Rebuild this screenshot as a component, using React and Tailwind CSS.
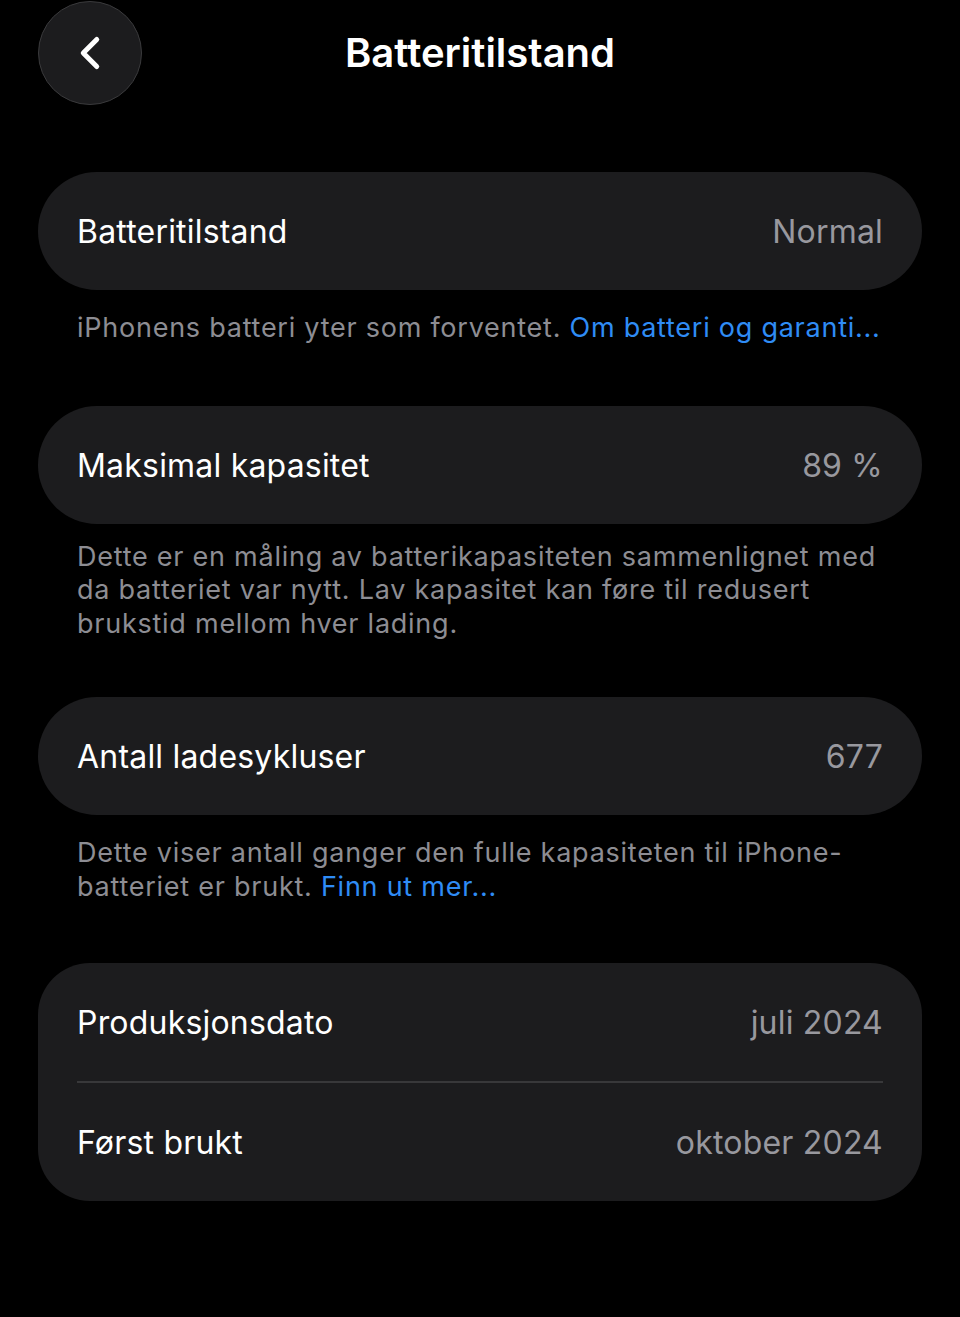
import { ChevronLeft } from "lucide-react";

const font = { fontFamily: "Inter, 'Noto Sans', sans-serif" };

const Row = ({ label, value }) => (
  <div className="flex h-[118px] items-center justify-between px-[39px] pt-[2px]">
    <span className="text-[32px] text-white tracking-[0.2px]">{label}</span>
    <span className="text-[32px] text-[#98989e] tracking-[0.2px]">{value}</span>
  </div>
);

const Note = ({ children, className = "" }) => (
  <p className={`whitespace-nowrap px-[39px] text-[27px] leading-[33.5px] tracking-[0.75px] text-[#8d8d93] ${className}`}>
    {children}
  </p>
);

export default function App() {
  return (
    <div className="min-h-[1317px] w-[960px] bg-black" style={font}>
      {/* Header */}
      <div className="relative flex h-[105px] items-center justify-center">
        <button className="absolute left-[38px] top-[1px] flex h-[104px] w-[104px] items-center justify-center rounded-full border border-[#3a3a3c] bg-[#1c1c1e]">
          <ChevronLeft className="h-[54px] w-[54px] text-white" strokeWidth={2.2} />
        </button>
        <h1 className="text-[40px] font-semibold text-white">Batteritilstand</h1>
      </div>

      <div className="px-[38px] pt-[67px]">
        <div className="rounded-full bg-[#1c1c1e]">
          <Row label="Batteritilstand" value="Normal" />
        </div>
        <Note className="mt-[21px] mb-[61px]">
          iPhonens batteri yter som forventet.{" "}
          <span className="text-[#2f8cf5]">Om batteri og garanti...</span>
        </Note>

        <div className="rounded-full bg-[#1c1c1e]">
          <Row label="Maksimal kapasitet" value="89 %" />
        </div>
        <Note className="mt-[16px] mb-[57px]">
          Dette er en måling av batterikapasiteten sammenlignet med
          <br />
          da batteriet var nytt. Lav kapasitet kan føre til redusert
          <br />
          brukstid mellom hver lading.
        </Note>

        <div className="rounded-full bg-[#1c1c1e]">
          <Row label="Antall ladesykluser" value="677" />
        </div>
        <Note className="mt-[21px] mb-[60px]">
          Dette viser antall ganger den fulle kapasiteten til iPhone-
          <br />
          batteriet er brukt. <span className="text-[#2f8cf5]">Finn ut mer...</span>
        </Note>

        <div className="rounded-[52px] bg-[#1c1c1e]">
          <Row label="Produksjonsdato" value="juli 2024" />
          <div className="mx-[39px] h-[2px] bg-[#38383a]" />
          <Row label="Først brukt" value="oktober 2024" />
        </div>
      </div>
    </div>
  );
}
